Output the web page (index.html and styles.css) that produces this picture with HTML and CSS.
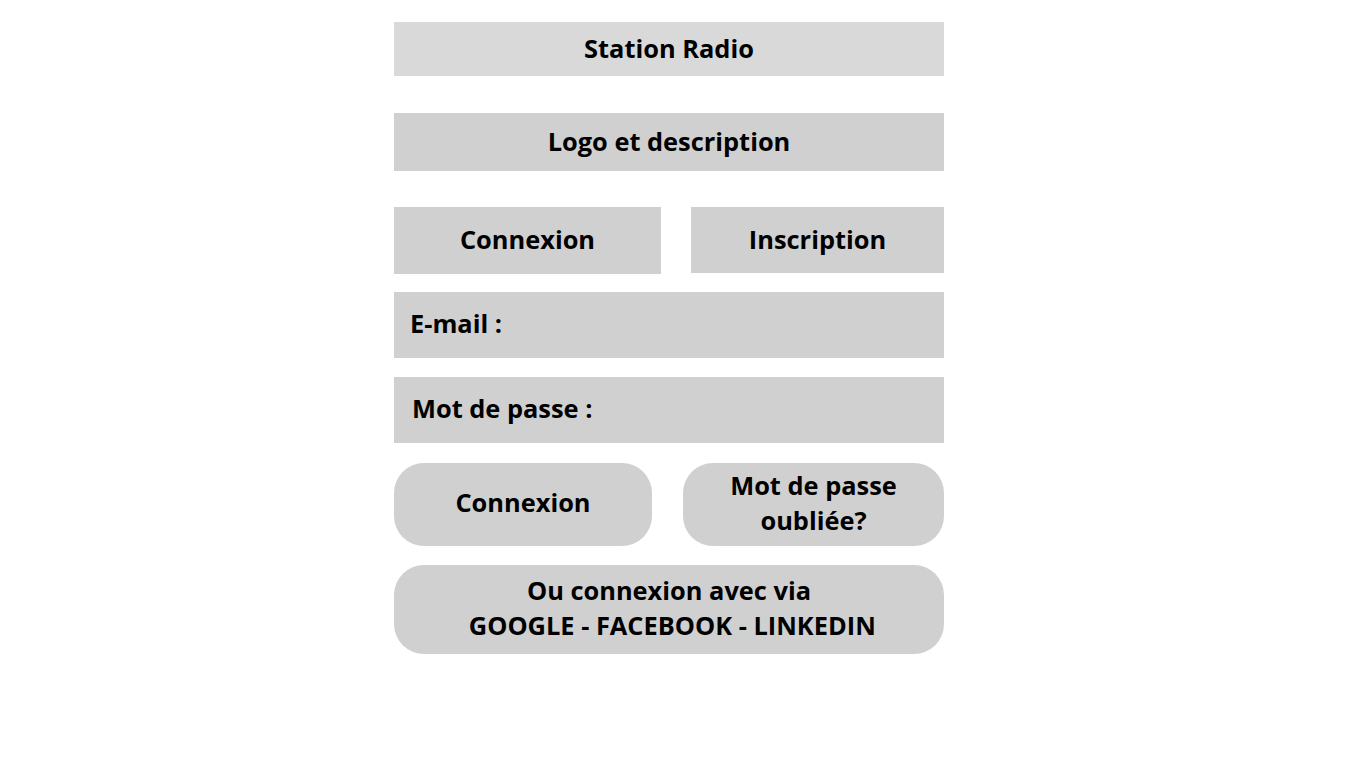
FILE: index.html
```html
<!DOCTYPE html>
<html lang="fr">
<head>
<meta charset="utf-8">
<title>Station Radio</title>
<link rel="stylesheet" href="styles.css">
</head>
<body>
<main class="page">
  <header class="block header">Station Radio</header>
  <section class="block logo">Logo et description</section>
  <nav class="tabs">
    <div class="tab tab-login">Connexion</div>
    <div class="tab tab-signup">Inscription</div>
  </nav>
  <div class="field field-email">E-mail :</div>
  <div class="field field-pass">Mot de passe :</div>
  <div class="actions">
    <div class="pill pill-login">Connexion</div>
    <div class="pill pill-forgot">Mot de passe<br>oubliée?</div>
  </div>
  <div class="pill social">Ou connexion avec via<br>&nbsp;GOOGLE - FACEBOOK - LINKEDIN</div>
</main>
</body>
</html>
```

FILE: styles.css
```css
html, body {
  margin: 0;
  padding: 0;
  background: #ffffff;
}
body {
  font-family: "Open Sans", "Liberation Sans", sans-serif;
  font-weight: 700;
  font-size: 25.4px;
  line-height: 35px;
  color: #000;
}
.page {
  width: 550px;
  margin-left: 394px;
  padding-top: 22px;
  display: flex;
  flex-direction: column;
}
.block {
  display: flex;
  align-items: center;
  justify-content: center;
  background: #d0d0d0;
  padding-bottom: 2px;
  box-sizing: border-box;
}
.header {
  height: 54px;
  background: #d9d9d9;
}
.logo {
  height: 58px;
  margin-top: 37px;
}
.tabs {
  margin-top: 36px;
  display: flex;
  justify-content: space-between;
  align-items: flex-start;
}
.tab {
  background: #d0d0d0;
  display: flex;
  align-items: center;
  justify-content: center;
  padding-bottom: 2px;
  box-sizing: border-box;
}
.tab-login {
  width: 267px;
  height: 67px;
}
.tab-signup {
  width: 253px;
  height: 66px;
}
.field {
  background: #d0d0d0;
  height: 66px;
  display: flex;
  align-items: center;
  padding-left: 16px;
  padding-bottom: 4px;
  box-sizing: border-box;
  margin-top: 18px;
}
.field-pass {
  padding-left: 18px;
  margin-top: 19px;
}
.actions {
  margin-top: 20px;
  display: flex;
  justify-content: space-between;
}
.pill {
  background: #d0d0d0;
  border-radius: 30px;
  display: flex;
  align-items: center;
  justify-content: center;
  text-align: center;
  padding-bottom: 4px;
  box-sizing: border-box;
}
.pill-login {
  width: 258px;
  height: 83px;
}
.pill-forgot {
  width: 261px;
  height: 83px;
}
.social {
  margin-top: 19px;
  height: 89px;
}
```
